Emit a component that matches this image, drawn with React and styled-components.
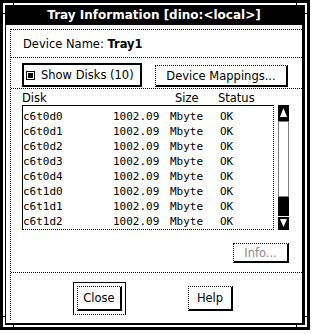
import React from "react";
import styled, { createGlobalStyle } from "styled-components";

const GlobalStyle = createGlobalStyle`
  html, body {
    margin: 0;
    padding: 0;
    background: #fff;
  }
  body {
    font-family: "DejaVu Sans", "Liberation Sans", sans-serif;
    font-size: 11.5px;
    color: #000;
  }
`;

const Window = styled.div`
  position: relative;
  box-sizing: border-box;
  width: 310px;
  height: 330px;
  padding: 5px 8px 7px 6px;
  background: #000;
  box-shadow: inset 0 0 0 3px #000, inset 0 0 0 5px #fff;
  display: flex;
  flex-direction: column;
`;

const CornerMark = styled.svg`
  position: absolute;
  ${(p) => (p.$top ? "top: 0;" : "bottom: 0;")}
  ${(p) => (p.$left ? "left: 0;" : "right: 0;")}
`;

const TitleBar = styled.div`
  height: 20px;
  line-height: 20px;
  text-align: center;
  color: #fff;
  font-weight: bold;
  font-size: 12px;
  white-space: nowrap;
`;

const Content = styled.div`
  flex: 1;
  background: #fff;
  padding: 4px 0 3px 4px;
  display: flex;
`;

const Panes = styled.div`
  flex: 1;
  display: flex;
  flex-direction: column;
  border-left: 1px dotted #000;
`;

const Pane = styled.div`
  box-sizing: border-box;
  border-top: 1px dotted #000;
  height: ${(p) => (p.$h ? `${p.$h}px` : "auto")};
  flex: ${(p) => (p.$h ? "none" : "1")};
`;

const NamePane = styled(Pane)`
  display: flex;
  align-items: center;
  padding-left: 12px;
`;

const ButtonsPane = styled(Pane)`
  display: flex;
  align-items: flex-end;
  gap: 13px;
  padding: 0 0 1px 11px;
`;

const ToggleButton = styled.div`
  box-sizing: border-box;
  width: 120px;
  height: 24px;
  border: 2px solid #000;
  display: flex;
  align-items: center;
  gap: 6px;
  padding-left: 2px;
  white-space: nowrap;
`;

const PushButton = styled.div`
  box-sizing: border-box;
  width: ${(p) => p.$w}px;
  height: ${(p) => p.$h}px;
  border-top: 1px dotted #000;
  border-left: 1px dotted #000;
  border-right: 2px solid #000;
  border-bottom: 2px solid #000;
  background: #fff;
  display: flex;
  align-items: center;
  justify-content: center;
  white-space: nowrap;
  color: ${(p) => (p.$disabled ? "#8a8a8a" : "#000")};
`;

const ListPane = styled(Pane)`
  display: flex;
  flex-direction: column;
  padding: 0 13px 0 11px;
`;

const Header = styled.div`
  display: grid;
  grid-template-columns: 153px 43px auto;
  height: 16px;
  line-height: 15px;
  padding-top: 2px;
  box-sizing: border-box;
`;

const ListRow = styled.div`
  display: flex;
  gap: 4px;
  height: 125px;
`;

const ListBox = styled.div`
  flex: 1;
  box-sizing: border-box;
  border-top: 1px solid #000;
  border-left: 1px solid #000;
  border-right: 1px dotted #000;
  border-bottom: 1px dotted #000;
  padding-top: 3px;
`;

const Row = styled.div`
  display: grid;
  grid-template-columns: 90px 57px 50px auto;
  height: 15px;
  line-height: 15px;
  font-family: "DejaVu Sans Mono", "Liberation Mono", monospace;
  font-size: 11px;
`;

const InfoRow = styled.div`
  margin-top: 13px;
  display: flex;
  justify-content: flex-end;
`;

const ActionPane = styled(Pane)`
  display: flex;
  justify-content: center;
  align-items: center;
  gap: 62px;
  padding: 4px 7px 0 0;
`;

const DefaultRing = styled.div`
  border: 1px solid #000;
  border-bottom-style: dotted;
  padding: 3px;
`;

const disks = ["c6t0d0", "c6t0d1", "c6t0d2", "c6t0d3", "c6t0d4", "c6t1d0", "c6t1d1", "c6t1d2"];

function Corner({ top, left }) {
  // black notch with a white L, drawn over the frame
  const t = (x, y) => [left ? x : 14 - x, top ? y : 14 - y];
  const pts = (arr) => arr.map(([x, y]) => t(x, y).join(",")).join(" ");
  return (
    <CornerMark $top={top} $left={left} width="14" height="14" viewBox="0 0 14 14">
      <polygon points={pts([[0, 0], [14, 0], [14, 6], [6, 6], [6, 14], [0, 14]])} fill="#000" />
      <polygon points={pts([[3, 3], [13, 3], [13, 5], [5, 5], [5, 13], [3, 13]])} fill="#fff" />
    </CornerMark>
  );
}

function ScrollBar() {
  return (
    <svg width="11" height="125" viewBox="0 0 11 125">
      <rect x="0" y="0" width="11" height="16" fill="#000" />
      <path d="M5.5 3 L9 12 L2 12 Z" fill="#fff" />
      <rect x="0.5" y="16.5" width="10" height="75" fill="none" stroke="#000" strokeDasharray="1 1" />
      <rect x="0" y="92" width="11" height="19" fill="#000" />
      <rect x="0" y="112" width="11" height="13" fill="#000" />
      <path d="M2 114 L9 114 L5.5 122 Z" fill="#fff" />
    </svg>
  );
}

function CheckGlyph() {
  return (
    <svg width="9" height="9" viewBox="0 0 9 9">
      <rect x="0.5" y="0.5" width="8" height="8" fill="#fff" stroke="#000" />
      <rect x="2" y="2" width="5" height="5" fill="#000" />
    </svg>
  );
}

export default function App() {
  return (
    <>
      <GlobalStyle />
      <Window>
        <TitleBar>Tray Information [dino:&lt;local&gt;]</TitleBar>
        <Content>
          <Panes>
            <NamePane $h={28}>
              Device Name:&nbsp;<b>Tray1</b>
            </NamePane>
            <ButtonsPane $h={31}>
              <ToggleButton>
                <CheckGlyph />
                Show Disks (10)
              </ToggleButton>
              <PushButton $w={133} $h={22}>Device Mappings...</PushButton>
            </ButtonsPane>
            <ListPane $h={184}>
              <Header>
                <span>Disk</span>
                <span>Size</span>
                <span>Status</span>
              </Header>
              <ListRow>
                <ListBox>
                  {disks.map((d) => (
                    <Row key={d}>
                      <span>{d}</span>
                      <span>1002.09</span>
                      <span>Mbyte</span>
                      <span>OK</span>
                    </Row>
                  ))}
                </ListBox>
                <ScrollBar />
              </ListRow>
              <InfoRow>
                <PushButton $w={56} $h={20} $disabled>Info...</PushButton>
              </InfoRow>
            </ListPane>
            <ActionPane>
              <DefaultRing>
                <PushButton $w={45} $h={25}>Close</PushButton>
              </DefaultRing>
              <PushButton $w={45} $h={25}>Help</PushButton>
            </ActionPane>
          </Panes>
        </Content>
        <Corner top left />
        <Corner top />
        <Corner left />
        <Corner />
      </Window>
    </>
  );
}
